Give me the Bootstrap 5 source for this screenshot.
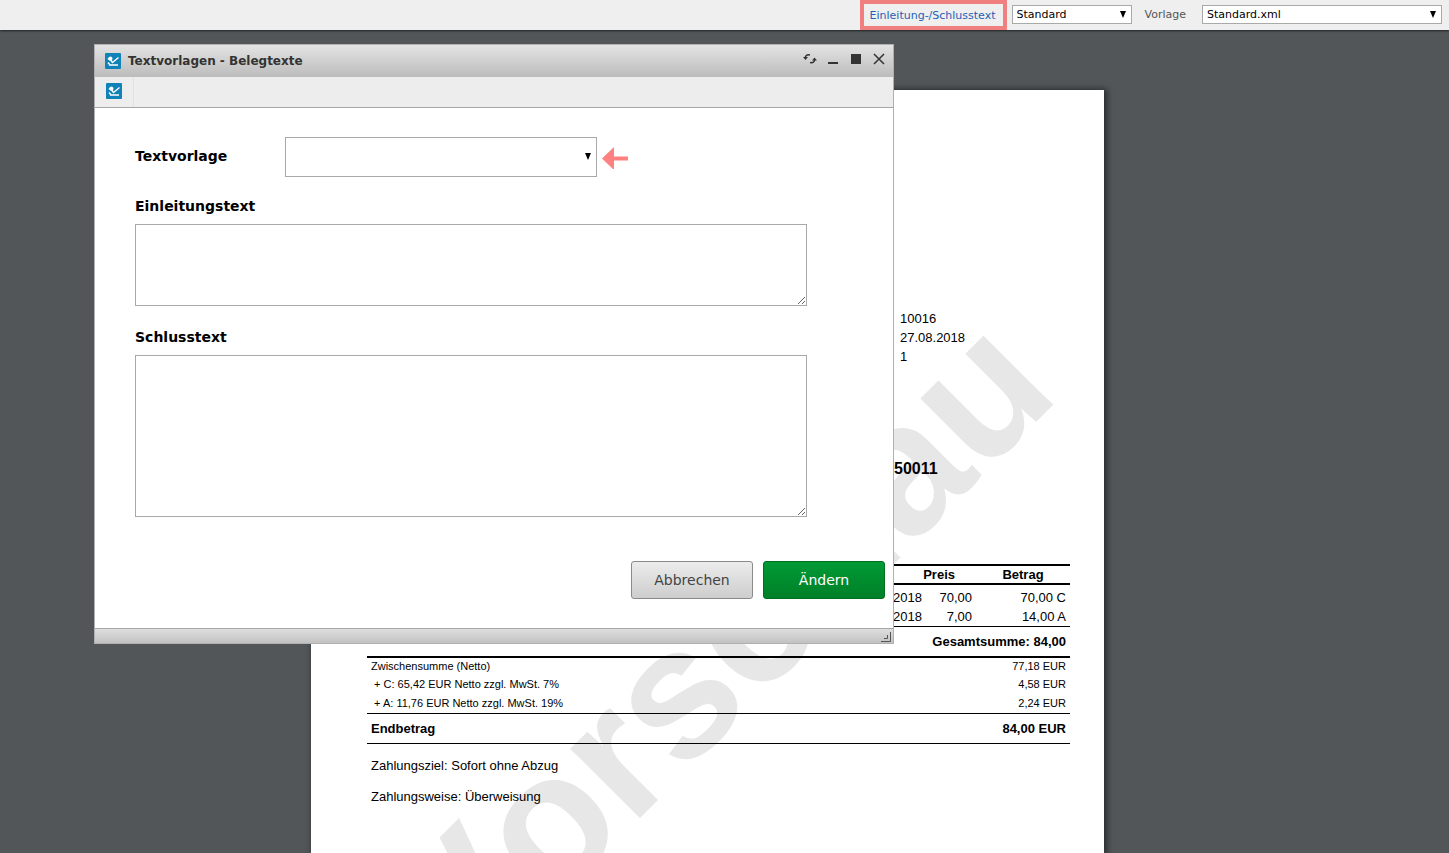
<!DOCTYPE html>
<html lang="de">
<head>
<meta charset="utf-8">
<meta name="viewport" content="width=device-width, initial-scale=1">
<title>Textvorlagen - Belegtexte</title>
<link href="https://cdn.jsdelivr.net/npm/bootstrap@5.3.0/dist/css/bootstrap.min.css" rel="stylesheet">
<style>
  body { background: #525659; font-family: "DejaVu Sans", Verdana, sans-serif; font-size: 14px; color: #000; }
  button, select, textarea { font-family: inherit; }

  .topbar { background: #efefef; height: 30px; padding: 0 7px 1px 0; font-size: 11px; box-shadow: 0 1px 2px rgba(0,0,0,.6); position: relative; }
  .topbar label { color: #555; margin: 0 16px 0 13px; padding-top: 2px; }
  .text-link { border: 4px solid #f08080; color: #1f5fb8; text-decoration: none; height: 30px; padding: 0 7px 0 6px; line-height: 24px; margin-right: 5px; align-self: flex-start; }
  .drop { appearance: none; border: 1px solid #a9a9a9; border-radius: 0; background: #fff; color: #000; width: 100%; height: 19px; padding: 0 4px; line-height: 17px; }
  .drop-box { position: relative; }
  .drop-box svg { position: absolute; right: 5px; top: 50%; margin-top: -5px; pointer-events: none; }
  .w-kind { width: 120px; }
  .w-file { width: 240px; }

  .viewer { min-height: calc(100vh - 30px); padding: 60px 34px 0 0; position: relative; }
  .sheet { width: 793px; background: #fff; box-shadow: 2px 0 6px 1px rgba(0,0,0,.5); position: relative; padding: 219px 34px 0 56px; font-family: "Liberation Sans", Arial, sans-serif; font-size: 13px; line-height: 19px; }
  .watermark { position: absolute; inset: 0; width: 100%; height: 100%; }
  .watermark text { font: bold 186px "Liberation Sans", Arial, sans-serif; font-kerning: none; fill: #e7e7e7; }
  .sheet-body { position: relative; }
  .meta { padding-left: 533px; }
  .doc-no { padding: 93px 0 0 527px; font-size: 16px; font-weight: bold; }
  .positions { width: 100%; table-layout: fixed; margin-top: 86px; border-bottom: 2px solid #000; }
  .positions th, .positions td { padding: 0 4px; text-align: right; }
  .positions thead { border-top: 2px solid #000; border-bottom: 2px solid #000; }
  .positions th { line-height: 17px; }
  .positions .c-price { width: 54px; padding: 0 21px 0 0; }
  .positions .c-amount { width: 94px; text-align: center; }
  .positions .c-date { padding-right: 0; }
  .positions tbody tr:first-child td { padding-top: 3px; }
  .rule-top td { border-top: 1px solid #000; }
  .positions .sum td { line-height: 29px; font-weight: bold; }
  .totals { width: 100%; font-size: 11px; }
  .totals td { padding: 0 4px; }
  .totals tr:first-child td { line-height: 17px; }
  .totals .final td { border-top: 1px solid #000; border-bottom: 1px solid #000; font-size: 13px; font-weight: bold; line-height: 29px; }
  .terms { margin: 0; padding: 12px 4px 0; line-height: 19px; }

  .win { position: absolute; left: 94px; top: 14px; width: 800px; background: #fff; border: 1px solid #b0b0b0; }
  .win-title { height: 32px; padding: 0 6px 0 10px; background: linear-gradient(#e3e3e3, #bcbcbc); font-size: 12px; font-weight: bold; color: #333; }
  .win-title svg { flex: none; }
  .win-title button { border: 0; background: none; padding: 0; line-height: 0; }
  .win-acts { gap: 7px; padding-bottom: 4px; }
  .win-name { margin: 0 auto 0 7px; }
  .win-tools { height: 31px; background: #ededed; border-bottom: 1px solid #a6a6a6; }
  .win-tools button { border: 0; border-right: 1px solid #e2e2e2; background: none; width: 39px; padding: 0 0 3px; }
  .win-body { padding: 29px 8px 29px 40px; }
  .win-body label { font-weight: bold; }
  .label-intro { margin: 19px 0 7px; }
  .label-end { margin: 21px 0 7px; }
  .field-label { width: 150px; padding-bottom: 2px; }
  .w-template { width: 312px; }
  .w-template .drop { height: 40px; }
  .area { display: block; width: 672px; border: 1px solid #a9a9a9; resize: both; background: #fff; }
  .area-intro { height: 82px; }
  .area-end { height: 162px; }
  .acts { gap: 10px; margin-top: 44px; }
  .act { width: 122px; height: 38px; border-radius: 3px; font-size: 14px; padding: 0; }
  .act-cancel { border: 1px solid #8a8a8a; background: linear-gradient(#ececec, #cdcdcd); color: #444; }
  .act-ok { border: 1px solid #00701f; background: linear-gradient(#009a35, #008028); color: #fff; }
  .win-foot { height: 15px; background: linear-gradient(#dedede, #c2c2c2); border-top: 1px solid #a6a6a6; padding: 3px 2px 0 0; line-height: 0; }
</style>
</head>
<body>
<svg width="0" height="0" class="position-absolute" aria-hidden="true">
  <symbol id="logo" viewBox="0 0 16 16"><rect width="16" height="16" rx="1" fill="#0f82b8"/><path d="M2.500 6 4 4l2-.5L7.500 5 7 7.500 5 8z" fill="#fff"/><path d="M6 7.500l1.500 2L13.500 4.500" fill="none" stroke="#fff" stroke-width="1.400"/><path d="M4 12h9M3 9.500 5 12" stroke="#fff" stroke-width="1.400" fill="none"/></symbol>
  <symbol id="caret" viewBox="0 0 8 8"><path d="M1 1h6L4 8z"/></symbol>
</svg>

<header class="topbar d-flex justify-content-end align-items-center">
  <a href="#" class="text-link">Einleitung-/Schlusstext</a>
  <div class="drop-box w-kind"><select class="drop" aria-label="Art"><option>Standard</option></select><svg width="8" height="8"><use href="#caret"/></svg></div>
  <label for="file">Vorlage</label>
  <div class="drop-box w-file"><select class="drop" id="file"><option>Standard.xml</option></select><svg width="8" height="8"><use href="#caret"/></svg></div>
</header>

<main class="viewer d-flex flex-column">
  <article class="sheet mx-auto flex-grow-1">
    <svg class="watermark"><text x="751" y="306" text-anchor="end" transform="rotate(-45 751 306)">Vorschau</text></svg>
    <div class="sheet-body">
      <div class="meta"><div>10016</div><div>27.08.2018</div><div>1</div></div>
      <div class="doc-no">50011</div>
      <table class="positions">
        <thead><tr><th></th><th class="c-price">Preis</th><th class="c-amount">Betrag</th></tr></thead>
        <tbody>
          <tr><td class="c-date">2018</td><td>70,00</td><td>70,00 C</td></tr>
          <tr><td class="c-date">2018</td><td>7,00</td><td>14,00 A</td></tr>
          <tr class="sum rule-top"><td colspan="3">Gesamtsumme: 84,00</td></tr>
        </tbody>
      </table>
      <table class="totals">
        <tbody>
          <tr><td>Zwischensumme (Netto)</td><td class="text-end">77,18 EUR</td></tr>
          <tr><td>&nbsp;+ C: 65,42 EUR Netto zzgl. MwSt. 7%</td><td class="text-end">4,58 EUR</td></tr>
          <tr><td>&nbsp;+ A: 11,76 EUR Netto zzgl. MwSt. 19%</td><td class="text-end">2,24 EUR</td></tr>
          <tr class="final"><td>Endbetrag</td><td class="text-end">84,00 EUR</td></tr>
        </tbody>
      </table>
      <p class="terms">Zahlungsziel: Sofort ohne Abzug</p>
      <p class="terms">Zahlungsweise: Überweisung</p>
    </div>
  </article>

  <section class="win" role="dialog" aria-labelledby="win-name">
    <div class="win-title d-flex align-items-center">
      <svg width="16" height="16"><use href="#logo"/></svg>
      <span id="win-name" class="win-name">Textvorlagen - Belegtexte</span>
      <div class="win-acts d-flex">
        <button type="button" aria-label="Neu laden"><svg width="16" height="16" viewBox="0 0 16 16"><path d="M3.500 7C3 4.500 5 3.500 8 4M12.500 8.500c.5 2.500-1.500 3.500-4.500 3" fill="none" stroke="#333" stroke-width="1.500"/><path d="M1 6h5L3.500 9zM15 9.500h-5L12.500 6.500z" fill="#333"/></svg></button>
        <button type="button" aria-label="Minimieren"><svg width="16" height="16"><path d="M3 11h10v2H3z" fill="#333"/></svg></button>
        <button type="button" aria-label="Maximieren"><svg width="16" height="16"><path d="M3 3h10v10H3z" fill="#333"/></svg></button>
        <button type="button" aria-label="Schließen"><svg width="16" height="16"><path d="M3 3l10 10M13 3L3 13" stroke="#333" stroke-width="1.500"/></svg></button>
      </div>
    </div>
    <div class="win-tools d-flex"><button type="button" aria-label="Belegtexte"><svg width="16" height="16"><use href="#logo"/></svg></button></div>
    <form class="win-body">
      <div class="d-flex align-items-center">
        <label class="field-label" for="tpl">Textvorlage</label>
        <div class="drop-box w-template"><select class="drop" id="tpl"><option></option></select><svg width="8" height="8"><use href="#caret"/></svg></div>
        <svg width="28" height="24" class="ms-1"><path d="M1 13.500 13 2v9.500h14v4H13V25z" fill="#ff8080"/></svg>
      </div>
      <label class="d-block label-intro" for="intro">Einleitungstext</label>
      <textarea class="area area-intro" id="intro"></textarea>
      <label class="d-block label-end" for="end">Schlusstext</label>
      <textarea class="area area-end" id="end"></textarea>
      <div class="acts d-flex justify-content-end">
        <button type="button" class="act act-cancel">Abbrechen</button>
        <button type="submit" class="act act-ok">Ändern</button>
      </div>
    </form>
    <div class="win-foot text-end"><svg width="10" height="10"><path d="M9.500 0v9.500H0M6.500 3v3.500H3" fill="none" stroke="#555"/></svg></div>
  </section>
</main>
<script src="https://cdn.jsdelivr.net/npm/bootstrap@5.3.0/dist/js/bootstrap.bundle.min.js"></script>
</body>
</html>
